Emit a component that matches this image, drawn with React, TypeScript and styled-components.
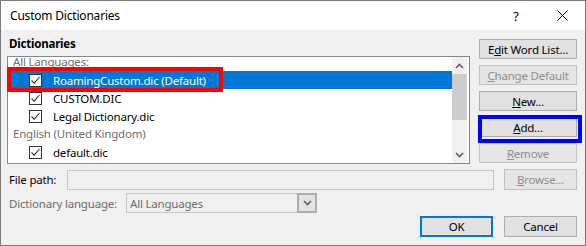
import React from 'react';
import styled, { createGlobalStyle } from 'styled-components';

const GlobalStyle = createGlobalStyle`
  html, body {
    margin: 0;
    padding: 0;
    background: #ffffff;
  }
  body {
    font-family: "Noto Sans", "Open Sans", sans-serif;
    font-size: 11.5px;
    letter-spacing: -0.2px;
    color: #000;
  }
`;

const Window = styled.div`
  position: relative;
  width: 586px;
  height: 246px;
  box-sizing: border-box;
  border: 1px solid #7a7a7a;
  background: #f0f0f0;
  display: flex;
  flex-direction: column;
  overflow: hidden;
`;

const TitleBar = styled.div`
  height: 29px;
  background: #fff;
  display: flex;
  align-items: center;
  padding-left: 9px;
  padding-right: 0;
  font-size: 12px;
`;

const TitleText = styled.div`
  flex: 1;
`;

const TitleButton = styled.div`
  width: 46px;
  display: flex;
  justify-content: center;
  align-items: center;
  font-size: 13px;
`;

const Body = styled.div`
  padding: 8px 8px 0 6px;
  display: flex;
  flex-direction: column;
`;

const Top = styled.div`
  display: flex;
  gap: 9px;
`;

const LeftCol = styled.div`
  width: 463px;
  display: flex;
  flex-direction: column;
`;

const SectionLabel = styled.div`
  font-weight: 700;
  line-height: 12px;
  height: 12px;
  padding-left: 2px;
  margin-bottom: 6px;
`;

const ListBox = styled.div`
  position: relative;
  height: 108px;
  box-sizing: border-box;
  border: 1px solid #828790;
  background: #fff;
  display: flex;
  overflow: hidden;
`;

const ListInner = styled.div`
  flex: 1;
  margin-top: -4px;
`;

const GroupRow = styled.div`
  height: 18px;
  line-height: 18px;
  padding-left: 5px;
  color: #6d6d6d;
  white-space: nowrap;
`;

const ItemRow = styled.div<{ $selected?: boolean }>`
  height: 18px;
  display: flex;
  align-items: center;
  padding-left: 21px;
  background: ${p => (p.$selected ? '#0078d7' : 'transparent')};
  color: ${p => (p.$selected ? '#fff' : '#000')};
  white-space: nowrap;
`;

const CheckBox = styled.div`
  width: 13px;
  height: 13px;
  box-sizing: border-box;
  border: 1px solid #333;
  background: #fff;
  display: flex;
  align-items: center;
  justify-content: center;
  margin-right: 11px;
  flex-shrink: 0;
`;

const ScrollBar = styled.div`
  width: 15px;
  margin: 0 2px 0 0;
  background: #f0f0f0;
  display: flex;
  flex-direction: column;
  align-items: center;
`;

const ScrollArrow = styled.div`
  height: 17px;
  width: 100%;
  display: flex;
  align-items: center;
  justify-content: center;
`;

const ScrollThumb = styled.div`
  width: 100%;
  height: 46px;
  background: #cdcdcd;
`;

const ScrollTrack = styled.div`
  flex: 1;
`;

const ButtonCol = styled.div`
  margin-top: 1px;
  width: 98px;
  display: flex;
  flex-direction: column;
  gap: 6px;
`;

const Button = styled.div<{ $disabled?: boolean; $default?: boolean; $w?: number; $h?: number }>`
  width: ${p => p.$w ?? 98}px;
  height: ${p => p.$h ?? 20}px;
  box-sizing: border-box;
  border: ${p => (p.$default ? '2px solid #0078d7' : p.$disabled ? '1px solid #bfbfbf' : '1px solid #adadad')};
  background: ${p => (p.$disabled ? '#e5e5e5' : '#e1e1e1')};
  color: ${p => (p.$disabled ? '#8d8d8d' : '#000')};
  display: flex;
  align-items: center;
  justify-content: center;
  white-space: nowrap;
  flex-shrink: 0;
`;

const Highlight = styled.div<{ $color: string }>`
  position: absolute;
  box-sizing: border-box;
  border: 4px solid ${p => p.$color};
  pointer-events: none;
`;

const FieldRow = styled.div<{ $mt: number }>`
  display: flex;
  align-items: center;
  margin-top: ${p => p.$mt}px;
  padding-left: 2px;
`;

const FieldLabel = styled.div<{ $w: number; $muted?: boolean }>`
  width: ${p => p.$w}px;
  color: ${p => (p.$muted ? '#6d6d6d' : '#000')};
  flex-shrink: 0;
  white-space: nowrap;
`;

const TextInput = styled.div`
  width: 429px;
  height: 20px;
  box-sizing: border-box;
  border: 1px solid #c4c4c4;
  background: #f0f0f0;
  margin-right: 10px;
`;

const Combo = styled.div`
  display: flex;
  height: 20px;
`;

const ComboText = styled.div`
  width: 171px;
  box-sizing: border-box;
  border: 1px solid #c4c4c4;
  border-right: none;
  color: #6d6d6d;
  padding-left: 3px;
  display: flex;
  align-items: center;
`;

const ComboButton = styled.div`
  width: 20px;
  box-sizing: border-box;
  border: 2px solid #adadad;
  background: #e3e3e3;
  display: flex;
  align-items: center;
  justify-content: center;
`;

const Footer = styled.div`
  display: flex;
  justify-content: flex-end;
  gap: 11px;
  margin-top: 3px;
`;

const Check = () => (
  <svg width="11" height="11" viewBox="0 0 11 11">
    <path d="M1.5 5.5 L4.2 8.2 L9.5 2" fill="none" stroke="#333" strokeWidth="1.1" />
  </svg>
);

const Chevron = ({ up }: { up?: boolean }) => (
  <svg width="9" height="6" viewBox="0 0 9 6">
    <path d={up ? 'M1 5 L4.5 1.5 L8 5' : 'M1 1 L4.5 4.5 L8 1'} fill="none" stroke="#606060" strokeWidth="1.6" />
  </svg>
);

const items: { type: 'group' | 'item'; label: string; selected?: boolean }[] = [
  { type: 'group', label: 'All Languages:' },
  { type: 'item', label: 'RoamingCustom.dic (Default)', selected: true },
  { type: 'item', label: 'CUSTOM.DIC' },
  { type: 'item', label: 'Legal Dictionary.dic' },
  { type: 'group', label: 'English (United Kingdom)' },
  { type: 'item', label: 'default.dic' },
  { type: 'group', label: 'English (United States)' },
];

export default function App() {
  return (
    <>
      <GlobalStyle />
      <Window>
        <TitleBar>
          <TitleText>Custom Dictionaries</TitleText>
          <TitleButton>?</TitleButton>
          <TitleButton>
            <svg width="11" height="11" viewBox="0 0 11 11">
              <path d="M0.5 0.5 L10.5 10.5 M10.5 0.5 L0.5 10.5" stroke="#000" strokeWidth="1" />
            </svg>
          </TitleButton>
        </TitleBar>
        <Body>
          <Top>
            <LeftCol>
              <SectionLabel>Dictionaries</SectionLabel>
              <ListBox>
                <ListInner>
                  {items.map((it, i) =>
                    it.type === 'group' ? (
                      <GroupRow key={i}>{it.label}</GroupRow>
                    ) : (
                      <ItemRow key={i} $selected={it.selected}>
                        <CheckBox>
                          <Check />
                        </CheckBox>
                        {it.label}
                      </ItemRow>
                    )
                  )}
                </ListInner>
                <ScrollBar>
                  <ScrollArrow>
                    <Chevron up />
                  </ScrollArrow>
                  <ScrollThumb />
                  <ScrollTrack />
                  <ScrollArrow>
                    <Chevron />
                  </ScrollArrow>
                </ScrollBar>
              </ListBox>
            </LeftCol>
            <ButtonCol>
              <Button>E<u>d</u>it Word List...</Button>
              <Button $disabled><u>C</u>hange Default</Button>
              <Button><u>N</u>ew...</Button>
              <Button><u>A</u>dd...</Button>
              <Button $disabled><u>R</u>emove</Button>
            </ButtonCol>
          </Top>
          <FieldRow $mt={5}>
            <FieldLabel $w={58}>File path:</FieldLabel>
            <TextInput />
            <Button $disabled $w={73} $h={21}><u>B</u>rowse...</Button>
          </FieldRow>
          <FieldRow $mt={3}>
            <FieldLabel $w={117} $muted>Dictionary language:</FieldLabel>
            <Combo>
              <ComboText>All Languages</ComboText>
              <ComboButton>
                <Chevron />
              </ComboButton>
            </Combo>
          </FieldRow>
          <Footer>
            <Button $default $w={73} $h={21}>OK</Button>
            <Button $w={73} $h={21}>Cancel</Button>
          </Footer>
        </Body>
        <Highlight $color="#ff0000" style={{ left: 6, top: 66, width: 216, height: 25 }} />
        <Highlight $color="#0000ff" style={{ left: 477, top: 114, width: 104, height: 28 }} />
      </Window>
    </>
  );
}
